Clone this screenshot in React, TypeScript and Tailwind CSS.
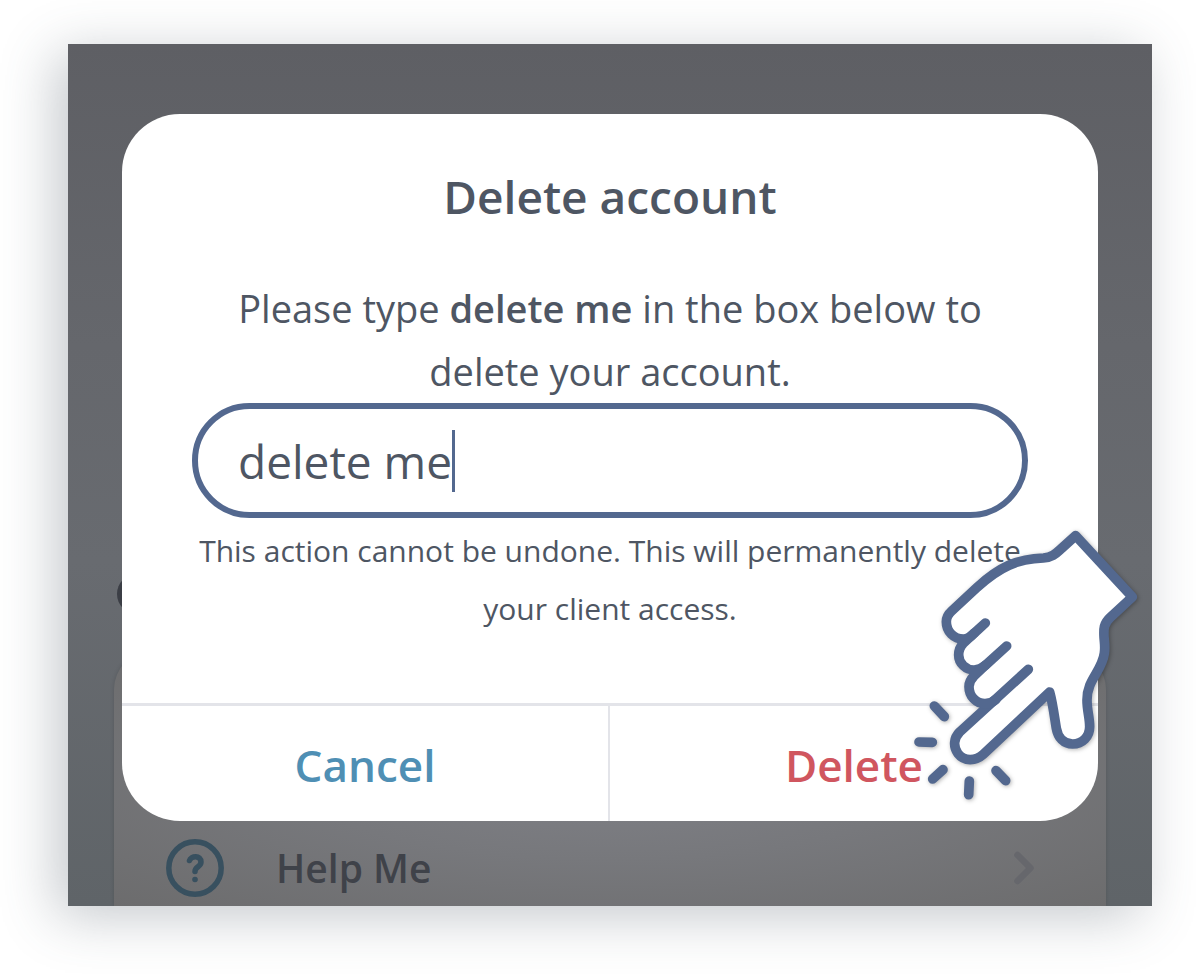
import { useState } from "react";
import { ChevronRight } from "lucide-react";

const RAYS = [
  "M103 588 L133 620",
  "M57 696 L97 697",
  "M129 779 L98 807",
  "M208 813 L206 854",
  "M288 782 L317 812",
];

/** Hand tapping on the delete button. */
function PointingHand() {
  return (
    <svg
      viewBox="30 30 690 840"
      fill="none"
      stroke="#53688f"
      strokeWidth={29}
      strokeLinecap="round"
      strokeLinejoin="round"
      className="pointer-events-none z-20 mr-3 mb-[106px] h-[280px] w-[230px] self-end justify-self-end overflow-visible drop-shadow-[1px_1px_2px_rgba(0,0,0,0.3)] [grid-area:1/1]"
      aria-hidden="true"
    >
      <path
        fill="#fff"
        d="M527 77 L697 261 L631 322 C610 341 611 358 612 380 C613 398 616 410 613 430 C606 484 561 508 561 570 C561 602 569 622 569 650 C569 680 547 702 518 702 C491 702 474 683 469 655 C463 618 458 578 449 546 L250 733 C228 753 193 756 174 731 C158 709 162 683 179 666 L250 600 L255 581 C230 581 207 560 207 530 C207 518 212 508 222 498 L222 480 C198 480 176 460 176 435 C176 420 180 410 190 400 L190 387 C162 387 139 365 139 335 C139 321 145 312 155 303 L230 233 C300 169 352 147 430 144 C460 142 470 128 486 114 Z"
        stroke="none"
      />
      <path d="M256 339 L222 370 C212 380 205 387 190 387 C162 387 139 365 139 335 C139 321 145 312 155 303 L230 233 C300 169 352 147 430 144 C460 142 470 128 486 114 L527 77 L697 261 L631 322 C610 341 611 358 612 380 C613 398 616 410 613 430 C606 484 561 508 561 570 C561 602 569 622 569 650 C569 680 547 702 518 702 C491 702 474 683 469 655 C463 618 458 578 449 546 L250 733 C228 753 193 756 174 731 C158 709 162 683 179 666 L385 478" />
      <path d="M222 370 L190 400 C180 410 176 420 176 435 C176 460 198 480 222 480 C237 480 245 475 256 466 L320 408" />
      <path d="M256 466 L222 498 C212 508 207 518 207 530 C207 560 230 581 255 581 C268 581 278 577 288 568" />
      {RAYS.map((d) => (
        <path key={d} d={d} />
      ))}
    </svg>
  );
}

function HelpIcon() {
  return (
    <svg viewBox="0 0 58 58" fill="none" stroke="#38505f" strokeLinecap="round" className="size-[58px]" aria-hidden="true">
      <circle cx="29" cy="29" r="26.2" strokeWidth="5.5" />
      <path d="M23.5 21.5 C25 16.5 35 16 35 23 C35 28 29 27.5 29 32.5" strokeWidth="5.5" />
      <circle cx="29" cy="40.5" r="2.8" fill="#38505f" stroke="none" />
    </svg>
  );
}

/** The dimmed settings page that lies behind the dialog. */
function SettingsPage() {
  return (
    <div className="flex flex-col justify-end overflow-hidden bg-[linear-gradient(180deg,#5e5f64_0%,#65676c_35%,#686b70_60%,#5f6468_100%)] [grid-area:1/1]">
      <div className="mx-[49px] mb-9 size-10 rounded-full bg-[#3b3e45]" />
      <div className="mx-[46px] flex h-[256px] flex-col justify-end rounded-t-[40px] bg-[radial-gradient(ellipse_at_50%_50%,#7f8086_0%,#77787c_45%,#6c6c6d_100%)] shadow-[0_0_4px_rgba(0,0,0,0.15)]">
        <a href="#help" className="flex items-center px-[52px] pb-2">
          <HelpIcon />
          <span className="ml-[52px] grow text-[39px] leading-[60px] font-semibold text-[#3f4249]">Help Me</span>
          <ChevronRight className="mr-1 size-[52px] text-[#66676c]" strokeWidth={3} />
        </a>
      </div>
    </div>
  );
}

function DeleteDialog() {
  const [value, setValue] = useState("delete me");

  return (
    <div className="z-10 px-[54px] pt-[70px] pb-[85px] [grid-area:1/1]">
      <div role="dialog" aria-labelledby="dialog-title" className="overflow-hidden rounded-[58px] bg-white text-[#4e5663]">
        <div className="px-[70px] pt-[51px] pb-[65px] text-center">
          <h1 id="dialog-title" className="text-[46px] leading-[62px] font-semibold">
            Delete account
          </h1>
          <label htmlFor="confirm" className="mt-[50px] block text-[38px] leading-[63px]">
            Please type <strong className="font-semibold">delete me</strong> in the box below to delete your account.
          </label>
          <div className="flex h-[115px] items-center rounded-full border-6 border-[#53688f] px-10">
            <input
              id="confirm"
              value={value}
              onChange={(e) => setValue(e.target.value)}
              className="field-sizing-content text-[46px] leading-[62px] outline-none"
            />
            <span className="h-[62px] w-[3px] bg-[#53688f]" />
          </div>
          <p className="mt-1 text-[30px] leading-[58px]">
            This action cannot be undone. This will permanently delete your client access.
          </p>
        </div>
        <div className="grid grid-cols-2 border-t-3 border-[#e3e4e9] text-[44px] leading-[62px] font-semibold">
          <button type="button" className="border-r-2 border-[#e3e4e9] pt-7 pb-[25px] text-[#4f8fb4]">
            Cancel
          </button>
          <button type="button" className="pt-7 pb-[25px] text-[#d0565f]">
            Delete
          </button>
        </div>
      </div>
    </div>
  );
}

export default function App() {
  return (
    <main className="min-h-screen bg-white pt-11 pr-11 pb-[68px] pl-[68px] font-['Open_Sans',sans-serif]">
      <div className="grid shadow-[-12px_10px_52px_rgba(70,85,95,0.32)]">
        <SettingsPage />
        <DeleteDialog />
        <PointingHand />
      </div>
    </main>
  );
}
